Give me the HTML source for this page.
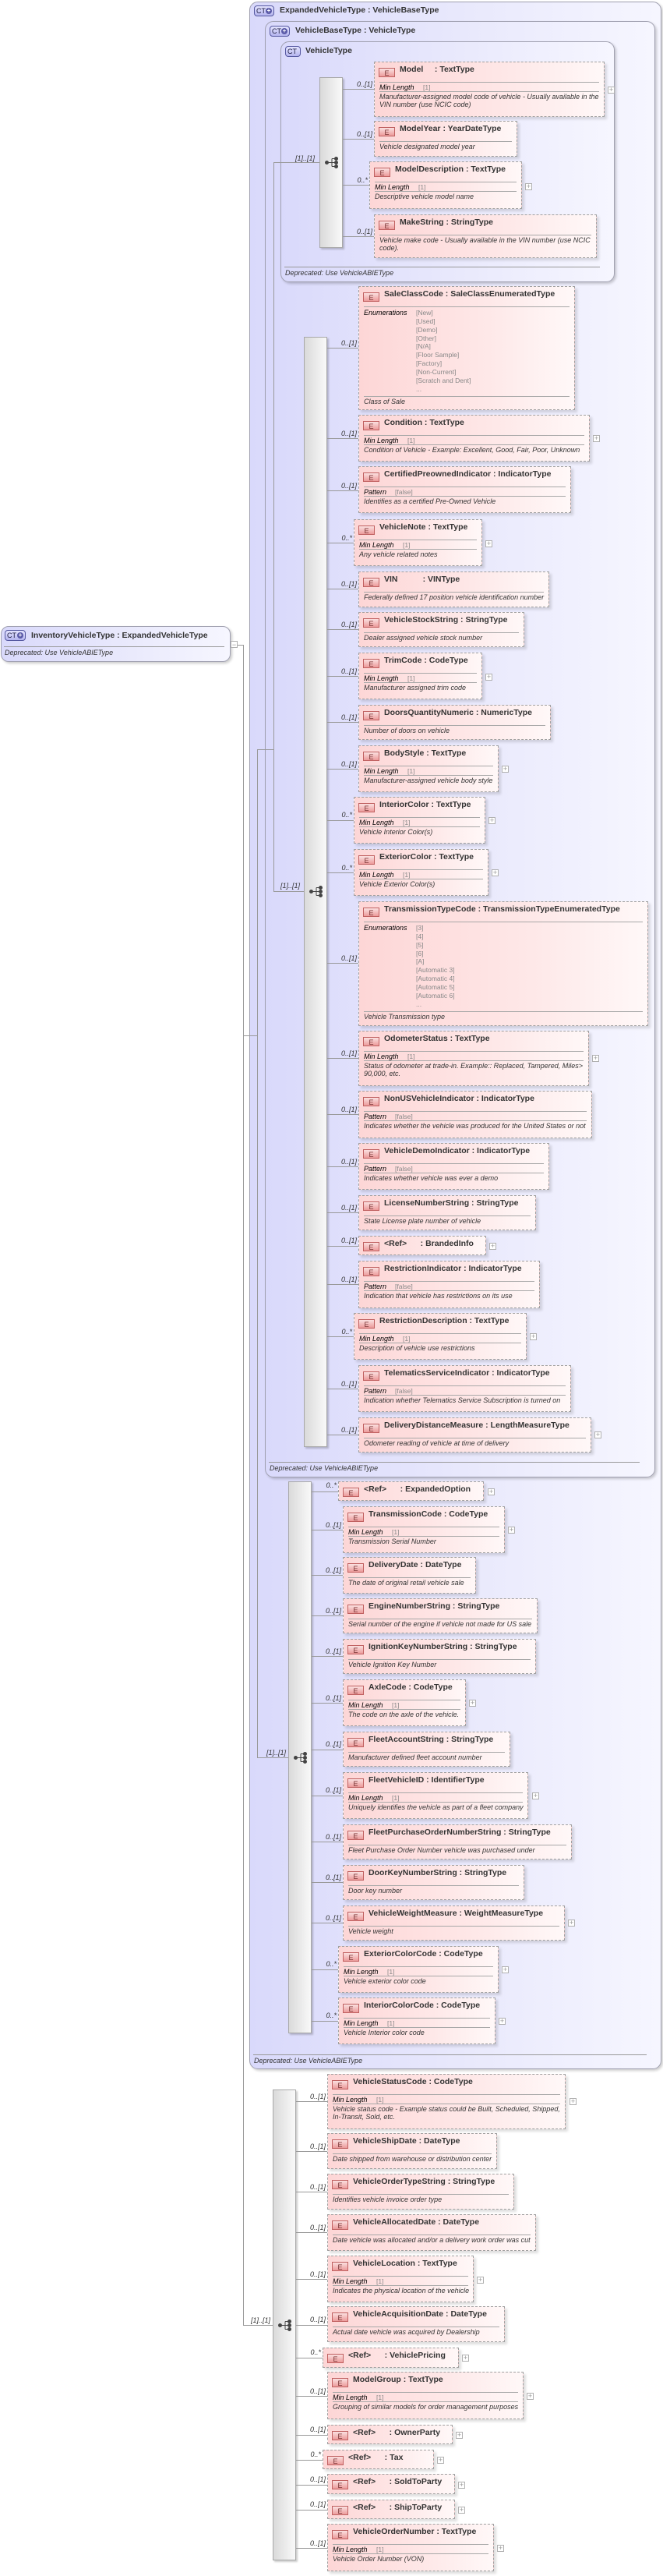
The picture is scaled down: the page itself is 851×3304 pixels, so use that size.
<!DOCTYPE html>
<html><head><meta charset="utf-8">
<style>
body{margin:0;width:851px;height:3304px;position:relative;background:#fff;overflow:hidden;font-family:"Liberation Sans",sans-serif}
div,span{box-sizing:border-box}
.ct{position:absolute;border:1px solid #a0a0b0;border-radius:11px;background:linear-gradient(to right,#d9d9fb 0%,#e8e8fc 50%,#f6f6ff 100%);box-shadow:2px 2px 3px rgba(0,0,0,.2)}
.cti{position:absolute;height:14px;border:1px solid #5558a0;border-radius:4px;background:linear-gradient(#e4e4ff,#b4b4ee);font:9px "Liberation Sans",sans-serif;color:#224;line-height:12px;padding-left:2px}
.cti b{position:absolute;right:2px;top:2px;width:8px;height:8px;border-radius:50%;background:#5a5aa8;color:#fff;font:bold 8px/8px "Liberation Sans";text-align:center}
.ctt{position:absolute;font:bold 10.5px "Liberation Sans",sans-serif;color:#333;white-space:nowrap;line-height:14px}
.dl{position:absolute;border-top:1px solid #999;height:0}
.dt{position:absolute;font:italic 9px "Liberation Sans",sans-serif;color:#333;white-space:nowrap;line-height:12px}
.seq{position:absolute;border:1px solid #a8a8a8;background:linear-gradient(to right,#dadada,#f9f9f9);box-shadow:2px 2px 2px rgba(0,0,0,.2)}
.l{position:absolute;height:0;border-top:1px solid #999}
.v{position:absolute;width:0;border-left:1px solid #999}
.e{position:absolute;border:1px dashed #a0a0a0;background:linear-gradient(to right,#fdd6d6 0%,#fee8e8 60%,#fff8f8 100%);box-shadow:3px 3px 3px rgba(0,0,0,.13);padding-top:3px}
.h{position:relative;height:16px;line-height:16px;padding-left:32px;font:bold 10.5px "Liberation Sans",sans-serif;color:#333;white-space:nowrap;margin-bottom:6px}
.ei{position:absolute;left:5px;top:4px;width:21px;height:12px;border:1px solid #c06060;background:linear-gradient(#fbe0e0,#ec9a9a);font:9px/10px "Liberation Sans";color:#733;text-align:center;padding-top:1px}
.r{margin:0 6px;border-top:1px solid #a8a8a8;padding-top:1px;line-height:12px;font:italic 9px "Liberation Sans",sans-serif;color:#333;white-space:nowrap}
.r2{line-height:10.5px;padding-top:2px;padding-bottom:1px}
.k{display:inline-block;width:56px;color:#000}
.k2{display:inline-block;width:40px;color:#000}
.k3{display:inline-block;width:67px;color:#000;vertical-align:top}
.vv{color:#888;font-style:normal;font-size:8.5px}
.vl{display:inline-block;vertical-align:top;color:#888;font-style:normal;font-size:8.5px;line-height:10.85px;padding-bottom:3px}
.c{position:absolute;width:42px;text-align:right;font:italic 9px "Liberation Sans",sans-serif;color:#333;line-height:12px;white-space:nowrap}
.p{position:absolute;width:9px;height:9px;border:1px solid #b0b0b0;background:#fff;font:9px/7px "Liberation Sans";color:#999;text-align:center}
.si{position:absolute}
</style></head><body>

<!-- Complex type boxes -->
<div class="ct" style="left:320px;top:2px;width:529px;height:2652px"></div>
<div class="cti" style="left:326px;top:7px;width:26px">CT<b>+</b></div>
<div class="ctt" style="left:359px;top:6px">ExpandedVehicleType : VehicleBaseType</div>

<div class="ct" style="left:340px;top:27px;width:501px;height:1868px"></div>
<div class="cti" style="left:346px;top:33px;width:26px">CT<b>+</b></div>
<div class="ctt" style="left:379px;top:32px">VehicleBaseType : VehicleType</div>

<div class="ct" style="left:360px;top:53px;width:429px;height:309px"></div>
<div class="cti" style="left:366px;top:59px;width:20px">CT</div>
<div class="ctt" style="left:392px;top:58px">VehicleType</div>
<div class="dl" style="left:365px;top:342px;width:405px"></div>
<div class="dt" style="left:366px;top:344px">Deprecated: Use VehicleABIEType</div>
<div class="dl" style="left:345px;top:1875px;width:476px"></div>
<div class="dt" style="left:346px;top:1877px">Deprecated: Use VehicleABIEType</div>
<div class="dl" style="left:325px;top:2635px;width:505px"></div>
<div class="dt" style="left:326px;top:2637px">Deprecated: Use VehicleABIEType</div>

<!-- Left root -->
<div class="ct" style="left:1px;top:803px;width:295px;height:46px;border-radius:10px"></div>
<div class="cti" style="left:6px;top:808px;width:27px">CT<b>+</b></div>
<div class="ctt" style="left:40px;top:808px">InventoryVehicleType : ExpandedVehicleType</div>
<div class="dl" style="left:5px;top:829px;width:283px"></div>
<div class="dt" style="left:6px;top:831px">Deprecated: Use VehicleABIEType</div>
<div class="p" style="left:296px;top:822px;line-height:8px">−</div>

<!-- connector lines -->
<div class="l" style="left:305px;top:827px;width:7px"></div>
<div class="v" style="left:312px;top:827px;height:2155px"></div>
<div class="l" style="left:312px;top:1328px;width:18px"></div>
<div class="l" style="left:312px;top:2982px;width:38px"></div>
<div class="v" style="left:330px;top:961px;height:1293px"></div>
<div class="l" style="left:330px;top:961px;width:21px"></div>
<div class="l" style="left:330px;top:2254px;width:40px"></div>
<div class="v" style="left:351px;top:208px;height:935px"></div>
<div class="l" style="left:351px;top:208px;width:59px"></div>
<div class="l" style="left:351px;top:1143px;width:39px"></div>

<div class="c" style="left:362px;top:197px">[1]..[1]</div>
<div class="c" style="left:343px;top:1130px">[1]..[1]</div>
<div class="c" style="left:325px;top:2242px">[1]..[1]</div>
<div class="c" style="left:305px;top:2970px">[1]..[1]</div>

<!-- sequence bars -->
<div class="seq" style="left:410px;top:99px;width:30px;height:219px"></div>
<div class="seq" style="left:390px;top:432px;width:30px;height:1424px"></div>
<div class="seq" style="left:370px;top:1900px;width:30px;height:708px"></div>
<div class="seq" style="left:350px;top:2680px;width:30px;height:604px"></div>

<svg class="si" style="left:417px;top:201px" width="18" height="15" viewBox="0 0 18 15"><g fill="#444" stroke="#444" stroke-width="1"><circle cx="2.5" cy="7.5" r="2"/><path d="M2.5 7.5H9M9 2.5V12.5M9 2.5H14M9 7.5H14M9 12.5H14" fill="none"/><circle cx="14.5" cy="2.5" r="2"/><circle cx="14.5" cy="7.5" r="2"/><circle cx="14.5" cy="12.5" r="2"/></g></svg>
<svg class="si" style="left:397px;top:1136px" width="18" height="15" viewBox="0 0 18 15"><g fill="#444" stroke="#444" stroke-width="1"><circle cx="2.5" cy="7.5" r="2"/><path d="M2.5 7.5H9M9 2.5V12.5M9 2.5H14M9 7.5H14M9 12.5H14" fill="none"/><circle cx="14.5" cy="2.5" r="2"/><circle cx="14.5" cy="7.5" r="2"/><circle cx="14.5" cy="12.5" r="2"/></g></svg>
<svg class="si" style="left:377px;top:2247px" width="18" height="15" viewBox="0 0 18 15"><g fill="#444" stroke="#444" stroke-width="1"><circle cx="2.5" cy="7.5" r="2"/><path d="M2.5 7.5H9M9 2.5V12.5M9 2.5H14M9 7.5H14M9 12.5H14" fill="none"/><circle cx="14.5" cy="2.5" r="2"/><circle cx="14.5" cy="7.5" r="2"/><circle cx="14.5" cy="12.5" r="2"/></g></svg>
<svg class="si" style="left:357px;top:2975px" width="18" height="15" viewBox="0 0 18 15"><g fill="#444" stroke="#444" stroke-width="1"><circle cx="2.5" cy="7.5" r="2"/><path d="M2.5 7.5H9M9 2.5V12.5M9 2.5H14M9 7.5H14M9 12.5H14" fill="none"/><circle cx="14.5" cy="2.5" r="2"/><circle cx="14.5" cy="7.5" r="2"/><circle cx="14.5" cy="12.5" r="2"/></g></svg>

<!-- ===== Seq1 children ===== -->
<div class="l" style="left:440px;top:114px;width:40px"></div><div class="c" style="left:436px;top:102px">0..[1]</div>
<div class="e" style="left:480px;top:79px;width:296px;height:71px"><div class="h"><span class="ei">E</span>Model &nbsp;&nbsp;&nbsp; : TextType</div><div class="r"><span class="k">Min Length</span><span class="vv">[1]</span></div><div class="r">Manufacturer-assigned model code of vehicle - Usually available in the<br>VIN number (use NCIC code)</div></div>
<div class="p" style="left:780px;top:111px">+</div>

<div class="l" style="left:440px;top:178px;width:40px"></div><div class="c" style="left:436px;top:166px">0..[1]</div>
<div class="e" style="left:480px;top:155px;width:184px;height:46px"><div class="h"><span class="ei">E</span>ModelYear : YearDateType</div><div class="r">Vehicle designated model year</div></div>

<div class="l" style="left:440px;top:237px;width:34px"></div><div class="c" style="left:430px;top:225px">0..*</div>
<div class="e" style="left:474px;top:207px;width:196px;height:61px"><div class="h"><span class="ei">E</span>ModelDescription : TextType</div><div class="r"><span class="k">Min Length</span><span class="vv">[1]</span></div><div class="r">Descriptive vehicle model name</div></div>
<div class="p" style="left:674px;top:235px">+</div>

<div class="l" style="left:440px;top:303px;width:40px"></div><div class="c" style="left:436px;top:291px">0..[1]</div>
<div class="e" style="left:480px;top:275px;width:286px;height:56px"><div class="h"><span class="ei">E</span>MakeString : StringType</div><div class="r">Vehicle make code - Usually available in the VIN number (use NCIC<br>code).</div></div>

<!-- ===== Seq2 children ===== -->
<div class="l" style="left:420px;top:446px;width:40px"></div><div class="c" style="left:416px;top:434px">0..[1]</div>
<div class="e" style="left:460px;top:367px;width:278px;height:159px"><div class="h"><span class="ei">E</span>SaleClassCode : SaleClassEnumeratedType</div><div class="r r2"><span class="k3">Enumerations</span><span class="vl">[New]<br>[Used]<br>[Demo]<br>[Other]<br>[N/A]<br>[Floor Sample]<br>[Factory]<br>[Non-Current]<br>[Scratch and Dent]<br>...</span></div><div class="r">Class of Sale</div></div>

<div class="l" style="left:420px;top:562px;width:40px"></div><div class="c" style="left:416px;top:550px">0..[1]</div>
<div class="e" style="left:460px;top:532px;width:297px;height:60px"><div class="h"><span class="ei">E</span>Condition : TextType</div><div class="r"><span class="k">Min Length</span><span class="vv">[1]</span></div><div class="r">Condition of Vehicle - Example: Excellent, Good, Fair, Poor, Unknown</div></div>
<div class="p" style="left:761px;top:558px">+</div>

<div class="l" style="left:420px;top:629px;width:40px"></div><div class="c" style="left:416px;top:617px">0..[1]</div>
<div class="e" style="left:460px;top:598px;width:273px;height:60px"><div class="h"><span class="ei">E</span>CertifiedPreownedIndicator : IndicatorType</div><div class="r"><span class="k2">Pattern</span><span class="vv">[false]</span></div><div class="r">Identifies as a certified Pre-Owned Vehicle</div></div>

<div class="l" style="left:420px;top:696px;width:34px"></div><div class="c" style="left:410px;top:684px">0..*</div>
<div class="e" style="left:454px;top:666px;width:165px;height:60px"><div class="h"><span class="ei">E</span>VehicleNote : TextType</div><div class="r"><span class="k">Min Length</span><span class="vv">[1]</span></div><div class="r">Any vehicle related notes</div></div>
<div class="p" style="left:623px;top:693px">+</div>

<div class="l" style="left:420px;top:755px;width:40px"></div><div class="c" style="left:416px;top:743px">0..[1]</div>
<div class="e" style="left:460px;top:733px;width:245px;height:46px"><div class="h"><span class="ei">E</span>VIN &nbsp;&nbsp;&nbsp;&nbsp;&nbsp;&nbsp;&nbsp;&nbsp;&nbsp; : VINType</div><div class="r">Federally defined 17 position vehicle identification number</div></div>

<div class="l" style="left:420px;top:807px;width:40px"></div><div class="c" style="left:416px;top:795px">0..[1]</div>
<div class="e" style="left:460px;top:785px;width:213px;height:45px"><div class="h"><span class="ei">E</span>VehicleStockString : StringType</div><div class="r">Dealer assigned vehicle stock number</div></div>

<div class="l" style="left:420px;top:867px;width:40px"></div><div class="c" style="left:416px;top:855px">0..[1]</div>
<div class="e" style="left:460px;top:837px;width:159px;height:60px"><div class="h"><span class="ei">E</span>TrimCode : CodeType</div><div class="r"><span class="k">Min Length</span><span class="vv">[1]</span></div><div class="r">Manufacturer assigned trim code</div></div>
<div class="p" style="left:623px;top:864px">+</div>

<div class="l" style="left:420px;top:926px;width:40px"></div><div class="c" style="left:416px;top:914px">0..[1]</div>
<div class="e" style="left:460px;top:904px;width:247px;height:45px"><div class="h"><span class="ei">E</span>DoorsQuantityNumeric : NumericType</div><div class="r">Number of doors on vehicle</div></div>

<div class="l" style="left:420px;top:986px;width:40px"></div><div class="c" style="left:416px;top:974px">0..[1]</div>
<div class="e" style="left:460px;top:956px;width:180px;height:60px"><div class="h"><span class="ei">E</span>BodyStyle : TextType</div><div class="r"><span class="k">Min Length</span><span class="vv">[1]</span></div><div class="r">Manufacturer-assigned vehicle body style</div></div>
<div class="p" style="left:644px;top:982px">+</div>

<div class="l" style="left:420px;top:1052px;width:34px"></div><div class="c" style="left:410px;top:1039px">0..*</div>
<div class="e" style="left:454px;top:1022px;width:169px;height:60px"><div class="h"><span class="ei">E</span>InteriorColor : TextType</div><div class="r"><span class="k">Min Length</span><span class="vv">[1]</span></div><div class="r">Vehicle Interior Color(s)</div></div>
<div class="p" style="left:627px;top:1048px">+</div>

<div class="l" style="left:420px;top:1119px;width:34px"></div><div class="c" style="left:410px;top:1107px">0..*</div>
<div class="e" style="left:454px;top:1089px;width:173px;height:60px"><div class="h"><span class="ei">E</span>ExteriorColor : TextType</div><div class="r"><span class="k">Min Length</span><span class="vv">[1]</span></div><div class="r">Vehicle Exterior Color(s)</div></div>
<div class="p" style="left:631px;top:1115px">+</div>

<div class="l" style="left:420px;top:1235px;width:40px"></div><div class="c" style="left:416px;top:1223px">0..[1]</div>
<div class="e" style="left:460px;top:1156px;width:372px;height:160px"><div class="h"><span class="ei">E</span>TransmissionTypeCode : TransmissionTypeEnumeratedType</div><div class="r r2"><span class="k3">Enumerations</span><span class="vl">[3]<br>[4]<br>[5]<br>[6]<br>[A]<br>[Automatic 3]<br>[Automatic 4]<br>[Automatic 5]<br>[Automatic 6]<br>...</span></div><div class="r">Vehicle Transmission type</div></div>

<div class="l" style="left:420px;top:1357px;width:40px"></div><div class="c" style="left:416px;top:1345px">0..[1]</div>
<div class="e" style="left:460px;top:1322px;width:296px;height:71px"><div class="h"><span class="ei">E</span>OdometerStatus : TextType</div><div class="r"><span class="k">Min Length</span><span class="vv">[1]</span></div><div class="r">Status of odometer at trade-in. Example:: Replaced, Tampered, Miles&gt;<br>90,000, etc.</div></div>
<div class="p" style="left:760px;top:1353px">+</div>

<div class="l" style="left:420px;top:1429px;width:40px"></div><div class="c" style="left:416px;top:1417px">0..[1]</div>
<div class="e" style="left:460px;top:1399px;width:300px;height:61px"><div class="h"><span class="ei">E</span>NonUSVehicleIndicator : IndicatorType</div><div class="r"><span class="k2">Pattern</span><span class="vv">[false]</span></div><div class="r">Indicates whether the vehicle was produced for the United States or not</div></div>

<div class="l" style="left:420px;top:1496px;width:40px"></div><div class="c" style="left:416px;top:1484px">0..[1]</div>
<div class="e" style="left:460px;top:1466px;width:245px;height:60px"><div class="h"><span class="ei">E</span>VehicleDemoIndicator : IndicatorType</div><div class="r"><span class="k2">Pattern</span><span class="vv">[false]</span></div><div class="r">Indicates whether vehicle was ever a demo</div></div>

<div class="l" style="left:420px;top:1555px;width:40px"></div><div class="c" style="left:416px;top:1543px">0..[1]</div>
<div class="e" style="left:460px;top:1533px;width:228px;height:45px"><div class="h"><span class="ei">E</span>LicenseNumberString : StringType</div><div class="r">State License plate number of vehicle</div></div>

<div class="l" style="left:420px;top:1598px;width:40px"></div><div class="c" style="left:416px;top:1585px">0..[1]</div>
<div class="e" style="left:460px;top:1585px;width:164px;height:25px"><div class="h"><span class="ei">E</span>&lt;Ref&gt; &nbsp;&nbsp;&nbsp;&nbsp; : BrandedInfo</div></div>
<div class="p" style="left:628px;top:1594px">+</div>

<div class="l" style="left:420px;top:1647px;width:40px"></div><div class="c" style="left:416px;top:1635px">0..[1]</div>
<div class="e" style="left:460px;top:1617px;width:233px;height:61px"><div class="h"><span class="ei">E</span>RestrictionIndicator : IndicatorType</div><div class="r"><span class="k2">Pattern</span><span class="vv">[false]</span></div><div class="r">Indication that vehicle has restrictions on its use</div></div>

<div class="l" style="left:420px;top:1714px;width:34px"></div><div class="c" style="left:410px;top:1702px">0..*</div>
<div class="e" style="left:454px;top:1684px;width:222px;height:60px"><div class="h"><span class="ei">E</span>RestrictionDescription : TextType</div><div class="r"><span class="k">Min Length</span><span class="vv">[1]</span></div><div class="r">Description of vehicle use restrictions</div></div>
<div class="p" style="left:680px;top:1710px">+</div>

<div class="l" style="left:420px;top:1781px;width:40px"></div><div class="c" style="left:416px;top:1769px">0..[1]</div>
<div class="e" style="left:460px;top:1751px;width:273px;height:60px"><div class="h"><span class="ei">E</span>TelematicsServiceIndicator : IndicatorType</div><div class="r"><span class="k2">Pattern</span><span class="vv">[false]</span></div><div class="r">Indication whether Telematics Service Subscription is turned on</div></div>

<div class="l" style="left:420px;top:1840px;width:40px"></div><div class="c" style="left:416px;top:1828px">0..[1]</div>
<div class="e" style="left:460px;top:1818px;width:299px;height:45px"><div class="h"><span class="ei">E</span>DeliveryDistanceMeasure : LengthMeasureType</div><div class="r">Odometer reading of vehicle at time of delivery</div></div>
<div class="p" style="left:763px;top:1836px">+</div>

<!-- ===== Seq3 children ===== -->
<div class="l" style="left:400px;top:1913px;width:34px"></div><div class="c" style="left:390px;top:1899px">0..*</div>
<div class="e" style="left:434px;top:1900px;width:187px;height:25px"><div class="h"><span class="ei">E</span>&lt;Ref&gt; &nbsp;&nbsp;&nbsp;&nbsp; : ExpandedOption</div></div>
<div class="p" style="left:626px;top:1909px">+</div>

<div class="l" style="left:400px;top:1962px;width:40px"></div><div class="c" style="left:396px;top:1950px">0..[1]</div>
<div class="e" style="left:440px;top:1932px;width:208px;height:60px"><div class="h"><span class="ei">E</span>TransmissionCode : CodeType</div><div class="r"><span class="k">Min Length</span><span class="vv">[1]</span></div><div class="r">Transmission Serial Number</div></div>
<div class="p" style="left:652px;top:1958px">+</div>

<div class="l" style="left:400px;top:2020px;width:40px"></div><div class="c" style="left:396px;top:2008px">0..[1]</div>
<div class="e" style="left:440px;top:1997px;width:171px;height:47px"><div class="h"><span class="ei">E</span>DeliveryDate : DateType</div><div class="r">The date of original retail vehicle sale</div></div>

<div class="l" style="left:400px;top:2072px;width:40px"></div><div class="c" style="left:396px;top:2060px">0..[1]</div>
<div class="e" style="left:440px;top:2050px;width:250px;height:45px"><div class="h"><span class="ei">E</span>EngineNumberString : StringType</div><div class="r">Serial number of the engine if vehicle not made for US sale</div></div>

<div class="l" style="left:400px;top:2124px;width:40px"></div><div class="c" style="left:396px;top:2112px">0..[1]</div>
<div class="e" style="left:440px;top:2102px;width:248px;height:45px"><div class="h"><span class="ei">E</span>IgnitionKeyNumberString : StringType</div><div class="r">Vehicle Ignition Key Number</div></div>

<div class="l" style="left:400px;top:2184px;width:40px"></div><div class="c" style="left:396px;top:2172px">0..[1]</div>
<div class="e" style="left:440px;top:2154px;width:158px;height:60px"><div class="h"><span class="ei">E</span>AxleCode : CodeType</div><div class="r"><span class="k">Min Length</span><span class="vv">[1]</span></div><div class="r">The code on the axle of the vehicle.</div></div>
<div class="p" style="left:602px;top:2180px">+</div>

<div class="l" style="left:400px;top:2244px;width:40px"></div><div class="c" style="left:396px;top:2231px">0..[1]</div>
<div class="e" style="left:440px;top:2221px;width:215px;height:45px"><div class="h"><span class="ei">E</span>FleetAccountString : StringType</div><div class="r">Manufacturer defined fleet account number</div></div>

<div class="l" style="left:400px;top:2303px;width:40px"></div><div class="c" style="left:396px;top:2290px">0..[1]</div>
<div class="e" style="left:440px;top:2273px;width:238px;height:60px"><div class="h"><span class="ei">E</span>FleetVehicleID : IdentifierType</div><div class="r"><span class="k">Min Length</span><span class="vv">[1]</span></div><div class="r">Uniquely identifies the vehicle as part of a fleet company</div></div>
<div class="p" style="left:683px;top:2299px">+</div>

<div class="l" style="left:400px;top:2362px;width:40px"></div><div class="c" style="left:396px;top:2350px">0..[1]</div>
<div class="e" style="left:440px;top:2340px;width:294px;height:45px"><div class="h"><span class="ei">E</span>FleetPurchaseOrderNumberString : StringType</div><div class="r">Fleet Purchase Order Number vehicle was purchased under</div></div>

<div class="l" style="left:400px;top:2414px;width:40px"></div><div class="c" style="left:396px;top:2402px">0..[1]</div>
<div class="e" style="left:440px;top:2392px;width:233px;height:45px"><div class="h"><span class="ei">E</span>DoorKeyNumberString : StringType</div><div class="r">Door key number</div></div>

<div class="l" style="left:400px;top:2466px;width:40px"></div><div class="c" style="left:396px;top:2454px">0..[1]</div>
<div class="e" style="left:440px;top:2444px;width:285px;height:45px"><div class="h"><span class="ei">E</span>VehicleWeightMeasure : WeightMeasureType</div><div class="r">Vehicle weight</div></div>
<div class="p" style="left:729px;top:2462px">+</div>

<div class="l" style="left:400px;top:2526px;width:34px"></div><div class="c" style="left:390px;top:2513px">0..*</div>
<div class="e" style="left:434px;top:2496px;width:206px;height:60px"><div class="h"><span class="ei">E</span>ExteriorColorCode : CodeType</div><div class="r"><span class="k">Min Length</span><span class="vv">[1]</span></div><div class="r">Vehicle exterior color code</div></div>
<div class="p" style="left:644px;top:2522px">+</div>

<div class="l" style="left:400px;top:2592px;width:34px"></div><div class="c" style="left:390px;top:2579px">0..*</div>
<div class="e" style="left:434px;top:2562px;width:202px;height:60px"><div class="h"><span class="ei">E</span>InteriorColorCode : CodeType</div><div class="r"><span class="k">Min Length</span><span class="vv">[1]</span></div><div class="r">Vehicle Interior color code</div></div>
<div class="p" style="left:640px;top:2588px">+</div>

<!-- ===== Seq4 children ===== -->
<div class="l" style="left:380px;top:2695px;width:40px"></div><div class="c" style="left:376px;top:2683px">0..[1]</div>
<div class="e" style="left:420px;top:2660px;width:306px;height:71px"><div class="h"><span class="ei">E</span>VehicleStatusCode : CodeType</div><div class="r"><span class="k">Min Length</span><span class="vv">[1]</span></div><div class="r">Vehicle status code - Example status could be Built, Scheduled, Shipped,<br>In-Transit, Sold, etc.</div></div>
<div class="p" style="left:731px;top:2691px">+</div>

<div class="l" style="left:380px;top:2759px;width:40px"></div><div class="c" style="left:376px;top:2747px">0..[1]</div>
<div class="e" style="left:420px;top:2736px;width:218px;height:46px"><div class="h"><span class="ei">E</span>VehicleShipDate : DateType</div><div class="r">Date shipped from warehouse or distribution center</div></div>

<div class="l" style="left:380px;top:2811px;width:40px"></div><div class="c" style="left:376px;top:2799px">0..[1]</div>
<div class="e" style="left:420px;top:2788px;width:240px;height:46px"><div class="h"><span class="ei">E</span>VehicleOrderTypeString : StringType</div><div class="r">Identifies vehicle invoice order type</div></div>

<div class="l" style="left:380px;top:2863px;width:40px"></div><div class="c" style="left:376px;top:2851px">0..[1]</div>
<div class="e" style="left:420px;top:2840px;width:268px;height:47px"><div class="h"><span class="ei">E</span>VehicleAllocatedDate : DateType</div><div class="r">Date vehicle was allocated and/or a delivery work order was cut</div></div>

<div class="l" style="left:380px;top:2923px;width:40px"></div><div class="c" style="left:376px;top:2911px">0..[1]</div>
<div class="e" style="left:420px;top:2893px;width:188px;height:60px"><div class="h"><span class="ei">E</span>VehicleLocation : TextType</div><div class="r"><span class="k">Min Length</span><span class="vv">[1]</span></div><div class="r">Indicates the physical location of the vehicle</div></div>
<div class="p" style="left:612px;top:2920px">+</div>

<div class="l" style="left:380px;top:2982px;width:40px"></div><div class="c" style="left:376px;top:2969px">0..[1]</div>
<div class="e" style="left:420px;top:2958px;width:228px;height:46px"><div class="h"><span class="ei">E</span>VehicleAcquisitionDate : DateType</div><div class="r">Actual date vehicle was acquired by Dealership</div></div>

<div class="l" style="left:380px;top:3024px;width:34px"></div><div class="c" style="left:370px;top:3011px">0..*</div>
<div class="e" style="left:414px;top:3011px;width:175px;height:26px"><div class="h"><span class="ei">E</span>&lt;Ref&gt; &nbsp;&nbsp;&nbsp;&nbsp; : VehiclePricing</div></div>
<div class="p" style="left:593px;top:3020px">+</div>

<div class="l" style="left:380px;top:3073px;width:40px"></div><div class="c" style="left:376px;top:3061px">0..[1]</div>
<div class="e" style="left:420px;top:3042px;width:252px;height:61px"><div class="h"><span class="ei">E</span>ModelGroup : TextType</div><div class="r"><span class="k">Min Length</span><span class="vv">[1]</span></div><div class="r">Grouping of similar models for order management purposes</div></div>
<div class="p" style="left:676px;top:3069px">+</div>

<div class="l" style="left:380px;top:3123px;width:40px"></div><div class="c" style="left:376px;top:3110px">0..[1]</div>
<div class="e" style="left:420px;top:3110px;width:161px;height:25px"><div class="h"><span class="ei">E</span>&lt;Ref&gt; &nbsp;&nbsp;&nbsp;&nbsp; : OwnerParty</div></div>
<div class="p" style="left:585px;top:3119px">+</div>

<div class="l" style="left:380px;top:3155px;width:34px"></div><div class="c" style="left:370px;top:3142px">0..*</div>
<div class="e" style="left:414px;top:3142px;width:143px;height:25px"><div class="h"><span class="ei">E</span>&lt;Ref&gt; &nbsp;&nbsp;&nbsp;&nbsp; : Tax</div></div>
<div class="p" style="left:561px;top:3151px">+</div>

<div class="l" style="left:380px;top:3187px;width:40px"></div><div class="c" style="left:376px;top:3174px">0..[1]</div>
<div class="e" style="left:420px;top:3173px;width:164px;height:26px"><div class="h"><span class="ei">E</span>&lt;Ref&gt; &nbsp;&nbsp;&nbsp;&nbsp; : SoldToParty</div></div>
<div class="p" style="left:588px;top:3183px">+</div>

<div class="l" style="left:380px;top:3219px;width:40px"></div><div class="c" style="left:376px;top:3206px">0..[1]</div>
<div class="e" style="left:420px;top:3206px;width:164px;height:25px"><div class="h"><span class="ei">E</span>&lt;Ref&gt; &nbsp;&nbsp;&nbsp;&nbsp; : ShipToParty</div></div>
<div class="p" style="left:588px;top:3215px">+</div>

<div class="l" style="left:380px;top:3268px;width:40px"></div><div class="c" style="left:376px;top:3256px">0..[1]</div>
<div class="e" style="left:420px;top:3237px;width:214px;height:61px"><div class="h"><span class="ei">E</span>VehicleOrderNumber : TextType</div><div class="r"><span class="k">Min Length</span><span class="vv">[1]</span></div><div class="r">Vehicle Order Number (VON)</div></div>
<div class="p" style="left:638px;top:3264px">+</div>

</body></html>
